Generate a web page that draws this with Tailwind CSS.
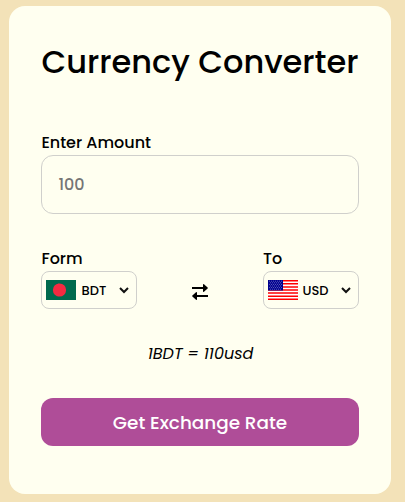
<!DOCTYPE html>
<html lang="en">
<head>
<meta charset="utf-8">
<title>Currency Converter</title>
<script src="https://cdn.jsdelivr.net/npm/@tailwindcss/browser@4"></script>
</head>
<body class="h-[502px] overflow-hidden bg-[#f3e2b8] pt-[6px] pl-[9px] font-['Poppins','Inter',sans-serif] font-medium text-black">
<main class="h-[488px] w-[382px] rounded-2xl bg-[#fffff0] px-8 pt-8">
  <h1 class="h-12 pl-[0.5px] text-[32px] leading-[48px] whitespace-nowrap"><span>Currency Converter</span></h1>
  <form>
    <label for="amount" class="mt-[45px] block h-6 pl-[0.4px] text-base leading-6"><span>Enter Amount</span></label>
    <input id="amount" type="text" placeholder="100" class="block h-[59px] w-full rounded-xl border border-[#d0d0cc] px-[16.4px] text-base placeholder:text-[#757575]">
    <div class="mt-8 flex items-end justify-between">
      <div>
        <div class="h-[25px] pl-[0.4px] text-base leading-[25px]"><span>Form</span></div>
        <div class="flex h-[38px] w-24 items-center rounded-lg border border-[#d0d0cc] pl-1">
          <svg width="30" height="20" viewBox="0 0 30 20"><path fill="#006a4e" d="M0 0h30v20H0z"/><circle cx="13.5" cy="10" r="6.6" fill="#f42a41"/></svg>
          <span class="ml-[5.5px] w-9 pt-px text-[13px]">BDT</span>
          <svg class="ml-[1.5px]" width="10" height="7" viewBox="0 0 10 7" fill="none" stroke="#111" stroke-width="2"><path d="M1 1l4 4 4-4"/></svg>
        </div>
      </div>
      <svg class="mb-[9px]" width="16" height="16" viewBox="0 0 16 16"><path d="M0 3h11V.5q.3-.8 1-.2L15.6 3.5q.6.5 0 1L12 7.7q-.7.6-1-.2V5H0zM16 11H5V8.5q-.3-.8-1-.2L.4 11.5q-.6.5 0 1L4 15.7q.7.6 1-.2V13h11z"/></svg>
      <div>
        <div class="h-[25px] text-base leading-[25px]"><span>To</span></div>
        <div class="flex h-[38px] w-24 items-center rounded-lg border border-[#d0d0cc] pl-1">
          <svg width="30" height="20" viewBox="0 0 30 20"><path fill="#fff" d="M0 0h30v20H0z"/><path stroke="#f00" stroke-width="1.54" d="M0 .77h30M0 3.85h30M0 6.92h30M0 10h30M0 13.08h30M0 16.15h30M0 19.23h30"/><path fill="#00008f" d="M0 0h15v10.5H0z"/><path stroke="#fff" stroke-opacity=".5" stroke-width=".8" stroke-dasharray=".9 1.1" d="M1 1.2h13.5M2 2.8h12M1 4.4h13.5M2 6h12M1 7.6h13.5M2 9.2h12"/></svg>
          <span class="ml-[4.5px] w-[37px] pt-px text-[13px]">USD</span>
          <svg class="ml-[1.5px]" width="10" height="7" viewBox="0 0 10 7" fill="none" stroke="#111" stroke-width="2"><path d="M1 1l4 4 4-4"/></svg>
        </div>
      </div>
    </div>
    <p class="mt-[33px] h-6 pl-[1px] text-center text-base leading-6 font-normal italic"><span>1BDT = 110usd</span></p>
    <button type="button" class="mt-8 block h-12 w-full rounded-xl bg-[#af4d98] pt-px text-[18.4px] text-white"><span>Get Exchange Rate</span></button>
  </form>
</main>
</body>
</html>
